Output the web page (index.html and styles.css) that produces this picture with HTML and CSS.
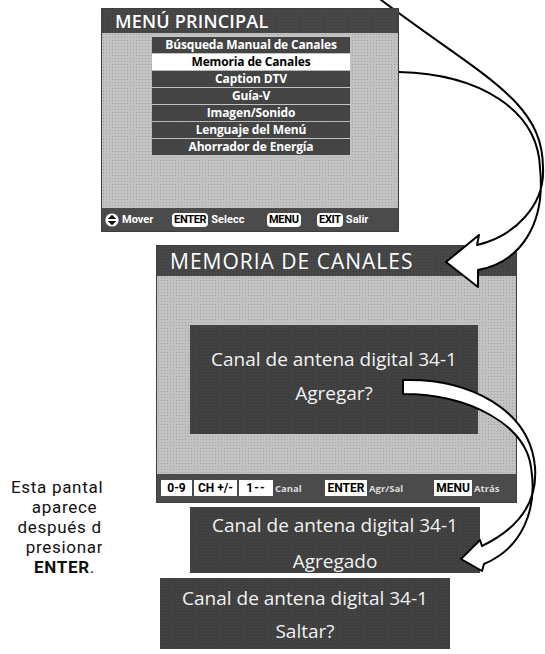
FILE: index.html
```html
<!DOCTYPE html>
<html lang="es">
<head>
  <meta charset="UTF-8">
  <title>Memoria de Canales</title>
  <link rel="stylesheet" href="styles.css">
</head>
<body>
  <div class="page">

    <section class="tv menu-main">
      <div class="tv-title">MENÚ PRINCIPAL</div>
      <div class="tv-body">
        <ul class="menu-list">
          <li>Búsqueda Manual de Canales</li>
          <li class="active">Memoria de Canales</li>
          <li>Caption DTV</li>
          <li>Guía-V</li>
          <li>Imagen/Sonido</li>
          <li>Lenguaje del Menú</li>
          <li>Ahorrador de Energía</li>
        </ul>
      </div>
      <div class="tv-foot menu-foot">
        <span class="hint">
          <svg class="updown" width="14" height="14" viewBox="0 0 14 14">
            <circle cx="7" cy="7" r="6.6" fill="#fff"/>
            <path d="M7 1.8 L11.3 6.1 L2.7 6.1 Z M7 12.2 L11.3 7.9 L2.7 7.9 Z" fill="#111"/>
          </svg>Mover
        </span>
        <span class="hint"><span class="key round">ENTER</span>Selecc</span>
        <span class="hint"><span class="key round">MENU</span></span>
        <span class="hint"><span class="key round">EXIT</span>Salir</span>
      </div>
    </section>

    <section class="tv memoria">
      <div class="tv-title big">MEMORIA DE CANALES</div>
      <div class="tv-body">
        <div class="dialog inset">
          <div class="dialog-line">Canal de antena digital 34-1</div>
          <div class="dialog-line">Agregar?</div>
        </div>
      </div>
      <div class="tv-foot memo-foot">
        <span class="key sq k-09">0-9</span>
        <span class="key sq k-ch">CH +/-</span>
        <span class="key sq k-one">1--</span>
        <span class="small s-canal">Canal</span>
        <span class="key sq k-enter">ENTER</span>
        <span class="small s-agr">Agr/Sal</span>
        <span class="key sq k-menu">MENU</span>
        <span class="small">Atrás</span>
      </div>
    </section>

    <div class="dialog added">
      <div class="dialog-line">Canal de antena digital 34-1</div>
      <div class="dialog-line">Agregado</div>
    </div>

    <div class="dialog skip">
      <div class="dialog-line">Canal de antena digital 34-1</div>
      <div class="dialog-line">Saltar?</div>
    </div>

    <div class="note-clip">
      <p class="note">Esta pantalla<br>aparece<br>después de<br>presionar<br><b>ENTER</b>.</p>
    </div>

    <svg class="arrows" width="545" height="654" viewBox="0 0 545 654">
      <!-- menu principal -> memoria: fill runs behind the menu panel, outline is open -->
      <path d="M368,-10 C478,75 543,98 543,168 C545,205 515,236 477,245 L479,235 L446,262 L478,287 L478,270 C520,262 546,225 540,168 C538,110 480,74 399,72 L330,72 L330,-10 Z"
            fill="#fff" stroke="none"/>
      <path d="M368,-10 C478,75 543,98 543,168 C545,205 515,236 477,245 L479,235 L446,262 L478,287 L478,270 C520,262 546,225 540,168 C538,110 480,74 399,72"
            fill="none" stroke="#000" stroke-width="2" stroke-linejoin="round"/>
      <!-- agregar -> agregado -->
      <path d="M403,380 C470,378 530,410 535,467 C538,505 515,530 482,546 L480,540 L461,559 L482,571 L484,564 C522,548 538,510 531,467 C525,425 470,394 403,394 Z"
            fill="#fff" stroke="#000" stroke-width="2" stroke-linejoin="round"/>
    </svg>

  </div>
</body>
</html>
```

FILE: styles.css
```css
body {
  margin: 0;
  background: #fff;
  font-family: 'Open Sans', 'DejaVu Sans', sans-serif;
}
.page {
  position: relative;
  z-index: 0;
  width: 545px;
  height: 654px;
  overflow: hidden;
}

/* tv screens */
.tv {
  display: flex;
  flex-direction: column;
  box-sizing: border-box;
  border: 1px solid #3e3e3e;
  background: #4a4a4a;
}
.tv-title {
  background: #474747 radial-gradient(#3a3a3a 0.7px, transparent 1px) 0 0 / 3px 3px;
  color: #fff;
  white-space: nowrap;
}
.tv-body {
  flex: 1;
  background: #c2c2c2 radial-gradient(#a2a2a2 0.7px, transparent 1px) 0 0 / 3px 3px;
}
.tv-foot {
  display: flex;
  align-items: center;
  background: #4b4b4b;
  color: #fff;
  white-space: nowrap;
}

.menu-main {
  position: relative;
  z-index: 2;
  width: 298px;
  height: 224px;
  margin: 8px 0 0 101px;
}
.menu-main .tv-title {
  height: 24px;
  line-height: 25px;
  padding-left: 13px;
  font-size: 18px;
  font-weight: 600;
  letter-spacing: 0.2px;
}
.menu-main .tv-body {
  padding-top: 4px;
}
.menu-list {
  list-style: none;
  margin: 0 0 0 50px;
  padding: 0;
  width: 198px;
}
.menu-list li {
  height: 16px;
  margin-bottom: 1px;
  line-height: 16px;
  text-align: center;
  font-size: 12px;
  font-weight: 700;
  letter-spacing: -0.15px;
  color: #fff;
  background: #444;
}
.menu-list li.active {
  background: #fff;
  color: #000;
}

.menu-foot {
  height: 23px;
  padding-left: 3px;
  font-family: Roboto, 'Open Sans', sans-serif;
  font-size: 11px;
  font-weight: 700;
}
.hint {
  display: flex;
  align-items: center;
  gap: 3px;
}
.hint:nth-child(1) { width: 67px; }
.hint:nth-child(2) { width: 95px; }
.hint:nth-child(3) { width: 50px; }

.key {
  display: inline-block;
  box-sizing: border-box;
  background: #fff;
  color: #000;
  font-family: Roboto, 'Open Sans', sans-serif;
  font-weight: 700;
  text-align: center;
}
.key.round {
  height: 14px;
  line-height: 14px;
  padding: 0 2px;
  border-radius: 4px;
  font-size: 11px;
  letter-spacing: -0.3px;
}
.key.sq {
  height: 16px;
  line-height: 16px;
  font-size: 12px;
  margin-right: 2px;
}
.k-09 { width: 31px; }
.k-ch { width: 43px; }
.k-one { width: 34px; margin-right: 5px; letter-spacing: 1px; }
.k-enter { width: 42px; margin-right: 5px; }
.k-menu { width: 38px; margin-right: 5px; }

/* memoria de canales */
.memoria {
  width: 361px;
  height: 258px;
  margin: 13px 0 0 156px;
}
.tv-title.big {
  height: 30px;
  line-height: 31px;
  padding-left: 13px;
  font-size: 21px;
  font-weight: 500;
  letter-spacing: 1px;
}
.memoria .tv-body {
  padding: 49px 0 0 33px;
}
.memo-foot {
  height: 28px;
  padding-left: 4px;
}
.memo-foot .small {
  font-size: 9.5px;
  font-weight: 700;
  color: #ddd;
}
.s-canal { width: 50px; }
.s-agr { width: 65px; }

/* dialogs */
.dialog {
  box-sizing: border-box;
  background: #3f3f3f radial-gradient(#4c4c4c 0.7px, transparent 1px) 0 0 / 3px 3px;
  color: #f2f2f2;
  text-align: center;
  font-size: 19px;
  font-weight: 500;
}
.dialog.inset {
  width: 288px;
  height: 109px;
  padding-top: 17px;
  line-height: 34px;
}
.dialog.added {
  width: 290px;
  height: 66px;
  margin: 9px 0 0 190px;
  line-height: 36px;
}
.dialog.added .dialog-line:first-child {
  margin-top: -5px;
}
.dialog.skip {
  width: 290px;
  height: 71px;
  margin: 5px 0 0 160px;
  padding-top: 4px;
  line-height: 33px;
}

/* side note */
.note-clip {
  position: absolute;
  left: 0;
  top: 477px;
  width: 102px;
  overflow: hidden;
}
.note {
  width: 129px;
  margin: 0;
  text-align: center;
  font-family: Roboto, 'Liberation Sans', sans-serif;
  font-size: 17px;
  letter-spacing: 0.7px;
  line-height: 20px;
  color: #111;
}

.arrows {
  position: absolute;
  left: 0;
  top: 0;
  z-index: 1;
  pointer-events: none;
}
```
